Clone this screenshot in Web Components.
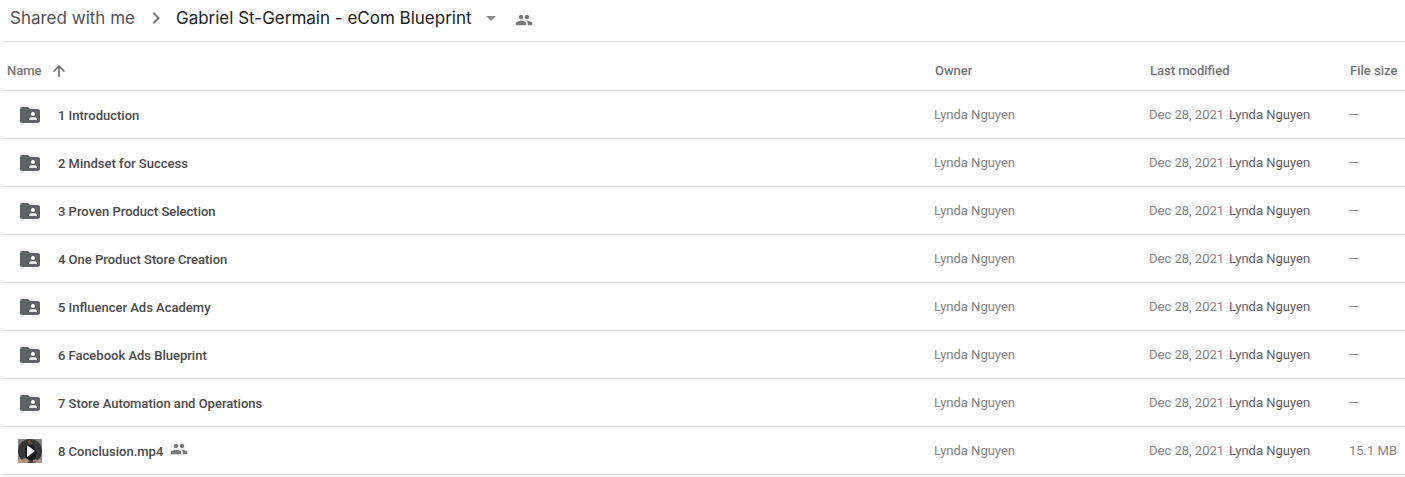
<!DOCTYPE html>
<html lang="en">
<head>
<meta charset="utf-8">
<title>Gabriel St-Germain - eCom Blueprint</title>
<style>
  body { margin: 0; background: #fff; color: #3c4043; font: 13px/20px Roboto, "Liberation Sans", sans-serif; }
</style>
</head>
<body>
<drive-page>
  <drive-breadcrumb slot="top" parent="Shared with me">Gabriel St-Germain - eCom Blueprint</drive-breadcrumb>
  <drive-file-list></drive-file-list>
</drive-page>

<script>
const ICONS = {
  chevron: '<path d="M10 6 8.600 7.400 13.200 12l-4.600 4.600L10 18l6-6z"/>',
  caret: '<path d="M7 10l5 5 5-5z"/>',
  up: '<path d="M4 12l1.400 1.400L11 7.800V20h2V7.800l5.600 5.600L20 12l-8-8z"/>',
  people: '<path d="M8 11c1.700 0 3-1.300 3-3S9.700 5 8 5 5 6.300 5 8s1.300 3 3 3zm8 0c1.700 0 3-1.300 3-3s-1.300-3-3-3-3 1.300-3 3 1.300 3 3 3zM8 13c-2.300 0-7 1.200-7 3.500V19h14v-2.500C15 14.200 10.300 13 8 13zm8 0c-.3 0-.6 0-1 .1 1.200.8 2 2 2 3.400V19h6v-2.500c0-2.300-4.700-3.500-7-3.500z"/>',
  folder: '<path d="M20 6h-8l-2-2H4c-1.100 0-2 .9-2 2v12c0 1.100.9 2 2 2h16c1.100 0 2-.9 2-2V8c0-1.100-.9-2-2-2zm-5 3c1.100 0 2 .9 2 2s-.9 2-2 2-2-.9-2-2 .9-2 2-2zm4 8h-8v-1c0-1.330 2.670-2 4-2s4 .67 4 2v1z"/>',
  video: '<path fill="#85817c" d="M0 0h24v24H0z"/><path fill="#b39a8b" d="M0 20l4-1 2 5H0zM20 20l4 1v3h-6z"/><circle cx="12" cy="12" r="12" fill="#2f3133" fill-opacity=".92"/><path fill="#191b1e" d="M7 10l3-5 5 1 4 7-2 8H8z"/><path fill="#70483f" d="M9 2l4-1 1 4-3 1z"/><path fill="#a98f80" d="M4 20l4-1 4 3-3 2H5zM15 21l3-1 1 2-4 1z"/><path fill="#fff" d="M9 6v12l8-6z"/>'
};

class DriveIcon extends HTMLElement {
  connectedCallback() {
    this.attachShadow({ mode: 'open' }).innerHTML = `
      <style>
        :host { display: inline-block; flex: none; width: var(--icon-size, 18px); height: var(--icon-size, 18px); }
        svg { display: block; width: 100%; height: 100%; fill: currentColor; }
      </style>
      <svg viewBox="0 0 24 24" aria-hidden="true">${ICONS[this.getAttribute('name')]}</svg>`;
  }
}
customElements.define('drive-icon', DriveIcon);

class DrivePage extends HTMLElement {
  connectedCallback() {
    this.attachShadow({ mode: 'open' }).innerHTML = `
      <style>
        :host { display: block; padding-left: 2px; }
        header { border-bottom: 1px solid #dadada; }
      </style>
      <header><slot name="top"></slot></header>
      <main><slot></slot></main>`;
  }
}
customElements.define('drive-page', DrivePage);

class DriveBreadcrumb extends HTMLElement {
  connectedCallback() {
    this.attachShadow({ mode: 'open' }).innerHTML = `
      <style>
        :host { display: block; font: 17px/24px Inter, "Open Sans", sans-serif; }
        nav { display: flex; align-items: center; height: 36px; padding: 0 8px 5px; }
        a { color: #505254; text-decoration: none; }
        button { display: flex; align-items: center; gap: 7px; padding: 0; border: 0; background: none; font: inherit; color: #202124; white-space: nowrap; }
        .sep { --icon-size: 24px; margin: 0 8px 0 9px; color: #777; }
        .caret { --icon-size: 24px; color: #8a8a8a; }
        .shared { margin: 4px 0 0 12px; color: #777; }
      </style>
      <nav aria-label="Breadcrumb">
        <a href="#">${this.getAttribute('parent')}</a>
        <drive-icon class="sep" name="chevron"></drive-icon>
        <button type="button"><span><slot></slot></span><drive-icon class="caret" name="caret"></drive-icon></button>
        <drive-icon class="shared" name="people"></drive-icon>
      </nav>`;
  }
}
customElements.define('drive-breadcrumb', DriveBreadcrumb);

class DriveItem extends HTMLElement {
  connectedCallback() {
    const video = this.getAttribute('kind') === 'video';
    this.attachShadow({ mode: 'open' }).innerHTML = `
      <style>
        :host { display: flex; align-items: center; padding-left: 16px; color: #4a4a4a; font-weight: 500; }
        .kind { --icon-size: 24px; margin-right: 16px; color: #5f6368; }
        .label { padding-top: 2px; }
        .shared { margin: 0 0 3px 7px; color: #777; }
      </style>
      <drive-icon class="kind" name="${video ? 'video' : 'folder'}"></drive-icon>
      <span class="label"><slot></slot></span>
      ${video ? '<drive-icon class="shared" name="people"></drive-icon>' : ''}`;
  }
}
customElements.define('drive-item', DriveItem);

const FILES = [
  ['1 Introduction', '—'],
  ['2 Mindset for Success', '—'],
  ['3 Proven Product Selection', '—'],
  ['4 One Product Store Creation', '—'],
  ['5 Influencer Ads Academy', '—'],
  ['6 Facebook Ads Blueprint', '—'],
  ['7 Store Automation and Operations', '—'],
  ['8 Conclusion.mp4', '15.1 MB', 'video']
];

class DriveFileList extends HTMLElement {
  connectedCallback() {
    this.attachShadow({ mode: 'open' }).innerHTML = `
      <style>
        :host { display: block; }
        table { width: 100%; table-layout: fixed; border-collapse: separate; border-spacing: 0; }
        th, td { box-sizing: border-box; height: 48px; padding: 0; border-bottom: 1px solid #dadada; text-align: left; font-weight: 400; color: #858585; white-space: nowrap; }
        th { height: 49px; padding: 10px 0 0 1px; font-weight: 500; color: #757575; }
        th:first-child { padding-left: 5px; }
        .owner { width: 215px; }
        .modified { width: 200px; }
        .size { width: 56px; }
        button { display: flex; align-items: center; gap: 8px; padding: 0; border: 0; background: none; font: inherit; color: inherit; }
        drive-icon { --icon-size: 18px; color: #616161; }
        .by { margin-left: 5px; color: #616161; }
      </style>
      <table>
        <thead><tr>
          <th aria-sort="ascending"><button type="button">Name<drive-icon name="up"></drive-icon></button></th>
          <th class="owner">Owner</th>
          <th class="modified">Last modified</th>
          <th class="size">File size</th>
        </tr></thead>
        <tbody>${FILES.map(([name, size, kind]) => `
          <tr>
            <td><drive-item kind="${kind || 'folder'}">${name}</drive-item></td>
            <td>Lynda Nguyen</td>
            <td>Dec 28, 2021<span class="by">Lynda Nguyen</span></td>
            <td>${size}</td>
          </tr>`).join('')}
        </tbody>
      </table>`;
  }
}
customElements.define('drive-file-list', DriveFileList);
</script>
</body>
</html>
